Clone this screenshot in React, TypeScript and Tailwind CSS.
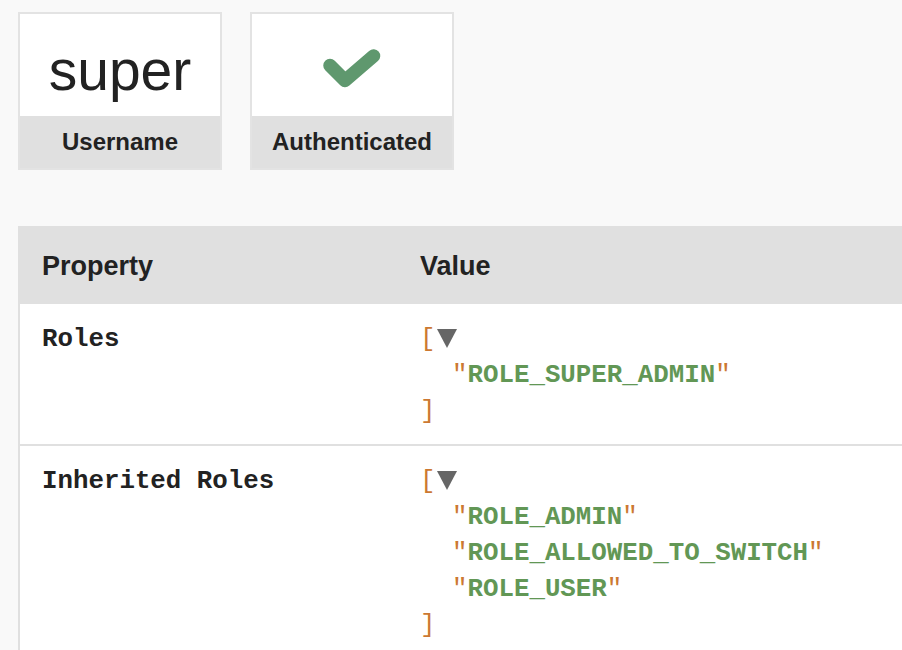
const mono = "font-['Courier_New','Liberation_Mono',monospace]";
const sans = "font-['Helvetica_Neue','Liberation_Sans',Arial,sans-serif]";

const Metric = ({ label, children }: { label: string; children: React.ReactNode }) => (
  <div className="w-[204px] border-2 border-[#e3e3e3] bg-[#e0e0e0]">
    <div className="flex h-[102px] items-center justify-center bg-white">{children}</div>
    <div className={`flex h-[52px] items-center justify-center text-[24px] font-bold text-[#222] ${sans}`}>{label}</div>
  </div>
);

const Toggle = () => (
  <svg width="22" height="22" viewBox="0 0 22 22" className="ml-[1px] inline-block align-[-3px]">
    <path d="M1 2 L21 2 L11 21 Z" fill="#666" />
  </svg>
);

const ArrayValue = ({ items }: { items: string[] }) => (
  <div className={`${mono} text-[25.8px] leading-[36px]`}>
    <div>
      <span className="text-[#cc7832]">[</span>
      <Toggle />
    </div>
    {items.map((item) => (
      <div key={item} className="pl-[32px]">
        <span className="text-[#cc7832]">"</span>
        <span className="font-bold text-[#629755]">{item}</span>
        <span className="text-[#cc7832]">"</span>
      </div>
    ))}
    <div className="text-[#cc7832]">]</div>
  </div>
);

const rows = [
  { name: "Roles", value: ["ROLE_SUPER_ADMIN"] },
  { name: "Inherited Roles", value: ["ROLE_ADMIN", "ROLE_ALLOWED_TO_SWITCH", "ROLE_USER"] },
];

export default function App() {
  return (
    <div className={`h-[650px] w-full overflow-hidden bg-[#f9f9f9] pl-[18px] pt-[12px] text-[#222] ${sans}`}>
      <div className="flex gap-[28px]">
        <Metric label="Username">
          <span className="mt-[10px] text-[57px] leading-none">super</span>
        </Metric>
        <Metric label="Authenticated">
          <svg width="58" height="42" viewBox="0 0 58 42" className="mt-[10px]">
            <path d="M7 16.5 L22 31.5 L50.5 7" fill="none" stroke="#5f986e" strokeWidth="13.5" strokeLinecap="round" strokeLinejoin="round" />
          </svg>
        </Metric>
      </div>

      <div className="mt-[56px] w-[1000px] border-2 border-[#e0e0e0] bg-white">
        <div className="flex h-[76px] items-center bg-[#e0e0e0] text-[27px] font-bold">
          <div className="w-[378px] px-[22px]">Property</div>
          <div className="flex-1 px-[22px]">Value</div>
        </div>
        {rows.map((row) => (
          <div key={row.name} className="flex border-b-2 border-[#e0e0e0] pb-[14px] pt-[18px]">
            <div className={`w-[378px] px-[22px] ${mono} text-[25.8px] font-bold leading-[36px]`}>{row.name}</div>
            <div className="flex-1 px-[22px]">
              <ArrayValue items={row.value} />
            </div>
          </div>
        ))}
      </div>
    </div>
  );
}
